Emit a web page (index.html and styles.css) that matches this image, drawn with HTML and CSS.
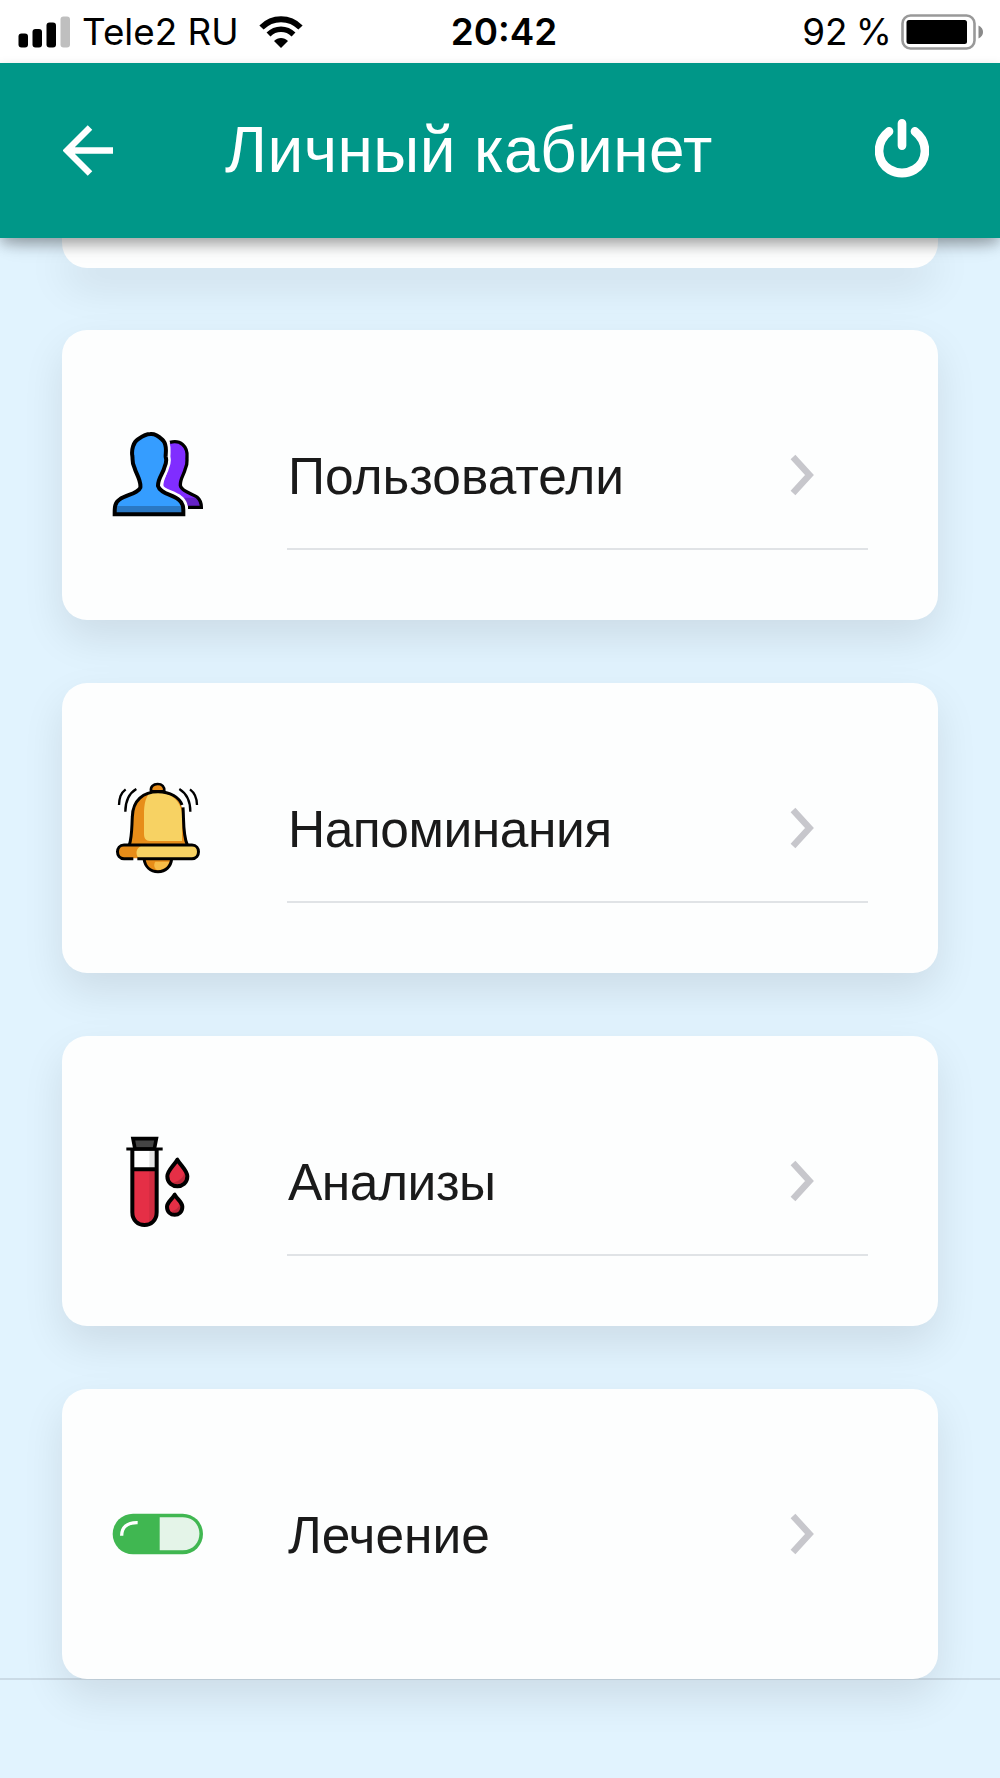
FILE: index.html
```html
<!DOCTYPE html>
<html lang="ru">
<head>
<meta charset="utf-8">
<meta name="viewport" content="width=device-width">
<title>Личный кабинет</title>
<link rel="stylesheet" href="styles.css">
</head>
<body>
<div class="status">
  <div class="status-left">
    <svg class="signal" width="53" height="32" viewBox="0 0 53 32">
      <rect x="0.5" y="17.5" width="9.5" height="14" rx="3"/>
      <rect x="14.5" y="13" width="9.5" height="18.5" rx="3"/>
      <rect x="28.5" y="6.500" width="9.500" height="25" rx="3"/>
      <rect x="42.500" y="0.500" width="9.500" height="31" rx="3" fill="#bfbfbf"/>
    </svg>
    <span class="carrier">Tele2 RU</span>
    <svg class="wifi" width="44" height="32" viewBox="0 0 44 32">
      <path d="M2.500 11.500C13.500 0.500 30.500 0.500 41.500 11.500" fill="none" stroke="#000" stroke-width="6"/>
      <path d="M9.500 18.500C16.500 11.500 27.500 11.500 34.500 18.500" fill="none" stroke="#000" stroke-width="5.500"/>
      <path d="M15 25C19 21 25 21 29 25L22 32Z"/>
    </svg>
  </div>
  <span class="time">20:42</span>
  <div class="status-right">
    <span class="percent">92 %</span>
    <svg class="battery" width="83" height="36" viewBox="0 0 83 36">
      <rect x="1.500" y="1.500" width="72" height="33" rx="8" fill="none" stroke="#999" stroke-width="2.600"/>
      <rect x="5.500" y="6" width="60.500" height="24" rx="2.500"/>
      <path d="M77.500 11.500C83.500 14 83.500 22 77.500 24.500Z" fill="#8a8a8a"/>
    </svg>
  </div>
</div>
<header class="header">
  <svg class="back" width="51" height="51" viewBox="0 0 51 51">
    <path d="M50 25.500H6M27 2.500L4 25.500L27 48.500" fill="none" stroke="#fff" stroke-width="6.400"/>
  </svg>
  <h1 class="title">Личный кабинет</h1>
  <svg class="power" width="54" height="60" viewBox="0 0 56 60" preserveAspectRatio="none">
    <path d="M14.500 13.500C-0.500 25 2 44 15 51.500C23 56 33 56 41 51.500C54 44 56.500 25 41.500 13.500M28 5.500V27.500" fill="none" stroke="#fff" stroke-width="9" stroke-linecap="round"/>
  </svg>
</header>
<main class="list">
  <section class="card card-cut"></section>
  <section class="card">
    <div class="slot">
      <svg width="120" height="110" viewBox="0 0 360 330">
        <path d="M210 67C240 58 264 78 261 112C260 122 264 130 256 146C252 164 240 176 241 196C243 213 278 222 291 231C305 241 307 250 307 262H266C254 225 204 222 193 207C184 190 200 170 204 145C208 120 216 105 206 77Z" fill="#802dff"/>
        <path d="M245 233H294C304 242 307 250 307 262H266Z" fill="#6522c7"/>
        <path d="M210 67C240 58 264 78 261 112C260 122 264 130 256 146C252 164 240 176 241 196C243 213 278 222 291 231C303 241 304 250 304 262H264" fill="none" stroke="#000" stroke-width="10"/>
        <path d="M190 62C203 79 196 100 197 110C198 118 202 122 194 140C190 160 173 175 174 198C180 220 215 223 235 238C252 250 250 266 250 283" fill="none" stroke="#fdfefe" stroke-width="28"/>
        <path d="M151 42C171 40 181 54 190 62C203 79 196 100 197 110C198 118 202 122 194 140C190 160 173 175 174 198C180 220 215 223 235 238C252 250 250 266 250 283H44C44 266 43 248 59 238C80 224 115 220 121 203C124 180 108 162 103 142C95 126 99 118 97 108C94 90 100 66 114 58C125 50 135 42 151 42Z" fill="#359dff"/>
        <path d="M48 258H248L250 283H44Z" fill="#2a78c4"/>
        <path d="M151 42C171 40 181 54 190 62C203 79 196 100 197 110C198 118 202 122 194 140C190 160 173 175 174 198C180 220 215 223 235 238C252 250 250 266 250 283H44C44 266 43 248 59 238C80 224 115 220 121 203C124 180 108 162 103 142C95 126 99 118 97 108C94 90 100 66 114 58C125 50 135 42 151 42Z" fill="none" stroke="#000" stroke-width="12"/>
      </svg>
    </div>
    <div class="row"><span class="label">Пользователи</span>
      <svg class="chevron" width="28" height="42" viewBox="0 0 28 42"><path d="M4 3L20.500 21L4 39" fill="none" stroke="#c7c7cc" stroke-width="6.500"/></svg>
    </div>
  </section>
  <section class="card">
    <div class="slot bell">
      <svg width="120" height="115" viewBox="0 0 360 345">
        <path d="M132 268C135 290 151 305 174 305C197 305 213 290 215 268Z" fill="#e78d19"/>
        <path d="M166 275H208C204 292 190 302 172 301C162 295 160 283 166 275Z" fill="#f7bc47"/>
        <path d="M132 266C135 290 151 305 174 305C197 305 213 290 215 266" fill="none" stroke="#000" stroke-width="9"/>
        <path d="M153 64C151 50 160 42 173 42C186 42 194 50 193 64Z" fill="#e78d19" stroke="#000" stroke-width="8"/>
        <path d="M88 225C96 200 95 175 97 140C98 91 130 65 174 65C219 65 251 96 251 140C252 175 252 202 262 225Z" fill="#e78d19"/>
        <path d="M152 67C210 58 248 95 246 140V213H150C137 212 132 204 132 191V135C132 100 138 78 152 67Z" fill="#f7d263"/>
        <path d="M88 225C96 200 95 175 97 140C98 91 130 65 174 65C211 65 238 82 246 105M249 112C252 150 248 195 262 225" fill="none" stroke="#000" stroke-width="9"/>
        <rect x="53" y="226" width="242" height="39" rx="19.500" fill="#e78d19"/>
        <path d="M123 228H276C299 230 299 262 276 264H115C105 250 109 235 123 228Z" fill="#f7d263"/>
        <path d="M100 266H72C46 266 46 225 72 225H276C302 225 302 266 276 266H112" fill="none" stroke="#000" stroke-width="9"/>
        <path d="M77 58C61 70 58 84 57 105M109 57C87 70 76 94 76 125M238 57C259 70 271 94 271 125M270 58C286 70 291 84 291 105" fill="none" stroke="#000" stroke-width="7"/>
      </svg>
    </div>
    <div class="row"><span class="label tight">Напоминания</span>
      <svg class="chevron" width="28" height="42" viewBox="0 0 28 42"><path d="M4 3L20.500 21L4 39" fill="none" stroke="#c7c7cc" stroke-width="6.500"/></svg>
    </div>
  </section>
  <section class="card">
    <div class="slot tube">
      <svg width="120" height="115" viewBox="0 0 360 345">
        <path d="M97 75H170V262C170 313 97 313 97 262Z" fill="#fff"/>
        <path d="M148 75H168V130H148Z" fill="#e5e5e5"/>
        <path d="M97 133H170V262C170 313 97 313 97 262Z" fill="#e52f46"/>
        <path d="M148 133H170V262C170 283 158 295 143 300C150 290 148 275 148 262Z" fill="#d02c40"/>
        <path d="M97 70V262C97 313 170 313 170 262V70M97 133H170" fill="none" stroke="#000" stroke-width="12"/>
        <path d="M99 41H169L163 72H105Z" fill="#444" stroke="#000" stroke-width="11"/>
        <path d="M79 72H188" stroke="#000" stroke-width="9"/>
        <path d="M232 104C220 124 202 137 202 154C202 194 262 194 262 154C262 137 244 124 232 104Z" fill="#e52f46"/>
        <path d="M254 142C266 174 235 186 217 174C240 168 250 158 254 142Z" fill="#bd293b"/>
        <path d="M224 209C215 224 201 233 201 245C201 277 247 277 247 245C247 233 233 224 224 209Z" fill="#e52f46"/>
        <path d="M239 233C251 258 229 269 214 259C230 254 238 247 239 233Z" fill="#bd293b"/>
        <path d="M232 104C220 124 202 137 202 154C202 194 262 194 262 154C262 137 244 124 232 104ZM224 209C215 224 201 233 201 245C201 277 247 277 247 245C247 233 233 224 224 209Z" fill="none" stroke="#000" stroke-width="12" stroke-linejoin="round"/>
      </svg>
    </div>
    <div class="row"><span class="label tight">Анализы</span>
      <svg class="chevron" width="28" height="42" viewBox="0 0 28 42"><path d="M4 3L20.500 21L4 39" fill="none" stroke="#c7c7cc" stroke-width="6.500"/></svg>
    </div>
  </section>
  <section class="card">
    <div class="slot pill">
      <svg width="120" height="80" viewBox="0 0 360 240">
        <rect x="38" y="56" width="271" height="122" rx="61" fill="#40b751"/>
        <path d="M179 67H248C315 67 315 166 248 166H179Z" fill="#e4f4e8"/>
        <path d="M65 122C65 98 80 82 113 83" fill="none" stroke="#fff" stroke-width="10"/>
      </svg>
    </div>
    <div class="row last"><span class="label">Лечение</span>
      <svg class="chevron" width="28" height="42" viewBox="0 0 28 42"><path d="M4 3L20.500 21L4 39" fill="none" stroke="#c7c7cc" stroke-width="6.500"/></svg>
    </div>
  </section>
</main>
<footer class="footer"></footer>
</body>
</html>
```
FILE: styles.css
```css
* { box-sizing: border-box; }
body {
  margin: 0;
  width: 1000px;
  height: 1778px;
  overflow: hidden;
  display: flex;
  flex-direction: column;
  background: #e1f3fe;
  color: #1a1a1a;
  font-family: "Liberation Sans", Arial, sans-serif;
}
svg { display: block; flex: none; }
.status {
  height: 62.5px;
  flex: none;
  display: grid;
  grid-template-columns: 1fr auto 1fr;
  align-items: center;
  padding: 2px 16px 0 18px;
  background: #fff;
  color: #000;
  font: 36.8px/44px Inter, sans-serif;
  white-space: nowrap;
}
.status-left, .status-right { display: flex; align-items: center; }
.status-right { justify-content: flex-end; }
.carrier { margin: 0 20px 0 11px; }
.time { padding-left: 6px; font-weight: 600; }
.percent { margin-right: 9px; word-spacing: -2px; }
.header {
  position: relative;
  z-index: 1;
  height: 175.5px;
  flex: none;
  display: flex;
  align-items: center;
  padding: 0 71px 0 63px;
  background: #009788;
  color: #fff;
  box-shadow: 0 6px 12px rgba(0, 0, 0, .24), 0 12px 20px -8px rgba(0, 0, 0, .2);
}
.title {
  flex: 1;
  margin: 0 0 0 111px;
  font-size: 64px;
  line-height: 72px;
  font-weight: 400;
  letter-spacing: .45px;
  white-space: nowrap;
}
.power { margin-top: -5px; }
.list {
  flex: none;
  display: flex;
  flex-direction: column;
  gap: 62.6px;
  padding: 0 62.5px 0 62.4px;
}
.card {
  height: 290.400px;
  flex: none;
  display: flex;
  align-items: center;
  padding: 0 70px 0 37.500px;
  border-radius: 25px;
  background: #fdfefe;
  box-shadow: 0 18px 42px rgba(0, 0, 0, .095);
}
.card-cut { height: 29.500px; border-radius: 0 0 25px 25px; }
.slot {
  width: 187px;
  flex: none;
}
.bell { padding-bottom: 2px; }
.tube, .pill { padding-top: 2px; }
.row {
  flex: 1;
  height: 150px;
  display: flex;
  align-items: center;
  justify-content: space-between;
  padding: 2px 51px 0 1px;
  border-bottom: 2px solid #e0e3e6;
}
.row.last { border-color: transparent; }
.label {
  padding-top: 2px;
  font-size: 51.5px;
  line-height: 58px;
  white-space: nowrap;
}
.tight { letter-spacing: -.45px; }
.footer {
  position: relative;
  z-index: -1;
  flex: 1;
  margin-top: -1px;
  border-top: 2px solid #cbdbe6;
}
```
